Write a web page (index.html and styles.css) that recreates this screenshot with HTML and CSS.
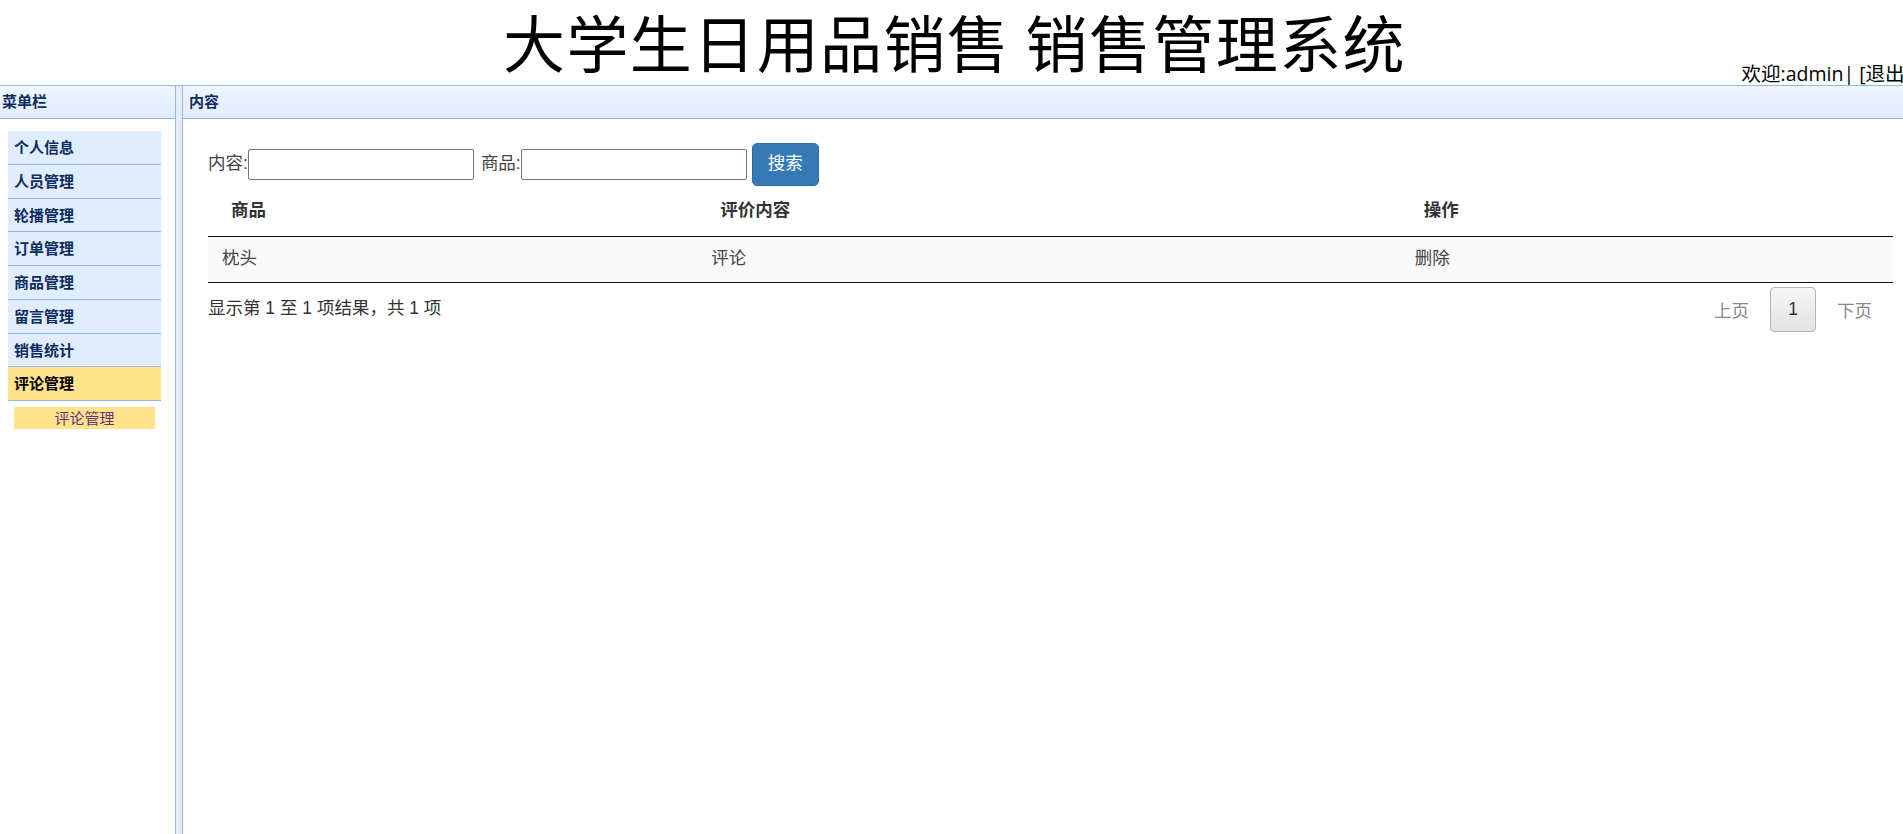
FILE: index.html
```html
<!DOCTYPE html>
<html lang="zh-CN">
<head>
<meta charset="utf-8">
<title>大学生日用品销售 销售管理系统</title>
<link rel="stylesheet" href="styles.css">
</head>
<body>
  <header class="top">
    <h1 class="site-title">大学生日用品销售 销售管理系统</h1>
    <div class="welcome">欢迎:admin| [<a class="logout" href="#">退出</a>]</div>
  </header>

  <div class="layout">
    <aside class="west">
      <div class="panel-header west-header">菜单栏</div>
      <div class="panel-body">
        <ul class="accordion">
          <li class="menu-item">个人信息</li>
          <li class="menu-item">人员管理</li>
          <li class="menu-item">轮播管理</li>
          <li class="menu-item">订单管理</li>
          <li class="menu-item">商品管理</li>
          <li class="menu-item">留言管理</li>
          <li class="menu-item">销售统计</li>
          <li class="menu-item menu-item-selected">评论管理</li>
        </ul>
        <a class="sub-item" href="#">评论管理</a>
      </div>
    </aside>

    <div class="split"></div>

    <main class="center">
      <div class="panel-header center-header">内容</div>
      <div class="panel-body content">
        <form class="search">
          <label class="search-label">内容:</label><input class="search-input" type="text">
          <label class="search-label search-label-next">商品:</label><input class="search-input" type="text">
          <button class="btn-primary" type="button">搜索</button>
        </form>

        <table class="data-table">
          <colgroup>
            <col class="col-goods">
            <col class="col-content">
            <col>
          </colgroup>
          <thead>
            <tr>
              <th>商品</th>
              <th>评价内容</th>
              <th>操作</th>
            </tr>
          </thead>
          <tbody>
            <tr>
              <td>枕头</td>
              <td>评论</td>
              <td>删除</td>
            </tr>
          </tbody>
        </table>

        <div class="table-footer">
          <span class="summary">显示第 1 至 1 项结果，共 1 项</span>
          <div class="pager">
            <span class="pager-link">上页</span>
            <span class="pager-current">1</span>
            <span class="pager-link">下页</span>
          </div>
        </div>
      </div>
    </main>
  </div>
</body>
</html>
```

FILE: styles.css
```css
html {
  overflow: hidden;
}

body {
  margin: 0;
  width: 1920px;
  height: 834px;
  background: #fff;
  font-family: "Liberation Sans", "Noto Sans CJK SC", sans-serif;
  color: #000;
}

/* top banner: big title centred, greeting in the lower right corner */
.top {
  display: grid;
  height: 85px;
}

.top > * {
  grid-area: 1 / 1;
}

.site-title {
  margin: 0;
  justify-self: center;
  align-self: center;
  padding: 0 11px 3px 0;
  font-family: "Noto Sans CJK SC", sans-serif;
  font-size: 62px;
  font-weight: normal;
  line-height: 1.2;
  letter-spacing: 1.4px;
  white-space: nowrap;
}

.welcome {
  justify-self: end;
  align-self: end;
  margin-right: 9px;
  font-family: "Open Sans", "Noto Sans CJK SC", sans-serif;
  font-size: 19.5px;
  line-height: 22px;
  white-space: nowrap;
}

.logout {
  color: #000;
  text-decoration: none;
}

/* border layout: west menu, splitter, center panel */
.layout {
  display: flex;
  height: 749px;
}

.west {
  width: 176px;
  flex: none;
  display: flex;
  flex-direction: column;
  box-sizing: border-box;
  border-right: 1px solid #95b8e7;
}

.split {
  width: 6px;
  flex: none;
  background: #e3ecf8;
  border-top: 1px solid #95b8e7;
}

.center {
  flex: 1;
  display: flex;
  flex-direction: column;
  border-left: 1px solid #95b8e7;
}

.panel-header {
  height: 31px;
  padding-top: 1px;
  line-height: 31px;
  border-top: 1px solid #95b8e7;
  border-bottom: 1px solid #95b8e7;
  background: linear-gradient(to bottom, #eff5ff 0, #e0ecff 100%);
  font-family: "DejaVu Sans", "Noto Sans CJK SC", sans-serif;
  font-size: 15px;
  font-weight: bold;
  color: #0e2d5f;
}

.west-header {
  padding-left: 2px;
}

.center-header {
  padding-left: 6px;
}

.panel-body {
  flex: 1;
  background: #fff;
}

/* accordion menu */
.accordion {
  list-style: none;
  margin: 12px 14px 0 8px;
  padding: 0;
}

.menu-item {
  height: 30.75px;
  padding: 2px 0 0 6px;
  line-height: 30.75px;
  background: #e0ecff;
  border-bottom: 1px solid #95b8e7;
  font-family: "DejaVu Sans", "Noto Sans CJK SC", sans-serif;
  font-size: 15px;
  font-weight: bold;
  color: #0e2d5f;
}

.menu-item-selected {
  background: #ffe48d;
  color: #000;
}

.sub-item {
  display: block;
  margin: 6px 20px 0 14px;
  height: 20px;
  padding-top: 2px;
  line-height: 20px;
  background: #ffe48d;
  text-align: center;
  font-size: 15px;
  color: #6a3275;
  text-decoration: none;
}

/* center content */
.content {
  padding: 24px 27px 0 25px;
  color: #444;
  font-size: 17.5px;
}

.search {
  display: flex;
  align-items: center;
  height: 43px;
  margin: 0;
}

.search-label {
  line-height: 25px;
  margin-bottom: 2px;
}

.search-label-next {
  margin-left: 7px;
}

.search-input {
  width: 226px;
  height: 31px;
  box-sizing: border-box;
  margin: 0;
  padding: 1px 3px;
  border: 1px solid #767676;
  border-radius: 2px;
  background: #fff;
  font-size: 15px;
}

.btn-primary {
  margin-left: 5px;
  height: 43px;
  padding: 0 15px 2px;
  border: 1px solid #2e6da4;
  border-radius: 5px;
  background: #337ab7;
  color: #fff;
  font-family: "Liberation Sans", "Noto Sans CJK SC", sans-serif;
  font-size: 17.5px;
  line-height: 25px;
}

.data-table {
  width: 100%;
  margin-top: 5px;
  border-collapse: collapse;
  table-layout: fixed;
}

.col-goods {
  width: 29.04%;
}

.col-content {
  width: 41.75%;
}

.data-table th {
  text-align: left;
  padding: 7px 0 13px 23px;
  line-height: 25px;
  font-weight: bold;
  color: #333;
  border-bottom: 1px solid #111;
}

.data-table td {
  padding: 9px 0 11px 14px;
  line-height: 25px;
  background: #f9f9f9;
  border-bottom: 1px solid #111;
}

.table-footer {
  display: flex;
  justify-content: space-between;
  align-items: center;
  margin-top: 4px;
  height: 45px;
}

.summary {
  margin-bottom: 6px;
  color: #333;
}

.pager {
  display: flex;
  align-items: center;
  gap: 21px;
  padding-right: 21px;
}

.pager-link {
  color: #888;
}

.pager-current {
  display: flex;
  align-items: center;
  justify-content: center;
  width: 46px;
  height: 45px;
  box-sizing: border-box;
  border: 1px solid #b5b5b5;
  border-radius: 4px;
  background: linear-gradient(to bottom, #f6f6f6, #e2e2e2);
  color: #333;
}
```
